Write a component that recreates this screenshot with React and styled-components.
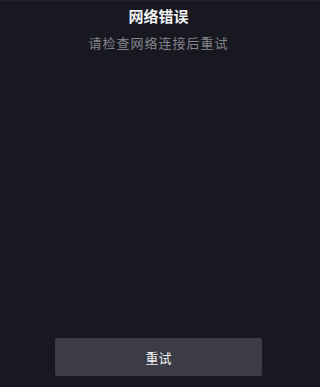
import React from "react";
import styled, { createGlobalStyle } from "styled-components";

const GlobalStyle = createGlobalStyle`
  html, body {
    margin: 0;
    padding: 0;
    background-color: #181820;
  }
`;

const Screen = styled.div`
  display: flex;
  flex-direction: column;
  align-items: center;
  box-sizing: border-box;
  height: 387px;
  padding: 0 3px 11px 0;
  background-color: #181820;
  border-top: 1px solid #22222c;
  font-family: "Noto Sans CJK SC", "Noto Sans", sans-serif;
`;

const Title = styled.h1`
  margin: 5px 0 0;
  font-size: 15px;
  line-height: 20px;
  font-weight: 700;
  color: #f2f2f4;
`;

const Hint = styled.p`
  margin: 8px 0 0;
  font-size: 13px;
  line-height: 18px;
  letter-spacing: 1px;
  color: #84848c;
`;

const RetryButton = styled.button`
  margin-top: auto;
  width: 207px;
  height: 38px;
  border: none;
  border-radius: 2px;
  background-color: #3c3c46;
  color: #f0f0f2;
  font-family: inherit;
  font-size: 13px;
  cursor: pointer;
`;

const App = () => (
  <>
    <GlobalStyle />
    <Screen>
      <Title>网络错误</Title>
      <Hint>请检查网络连接后重试</Hint>
      <RetryButton>重试</RetryButton>
    </Screen>
  </>
);

export default App;
